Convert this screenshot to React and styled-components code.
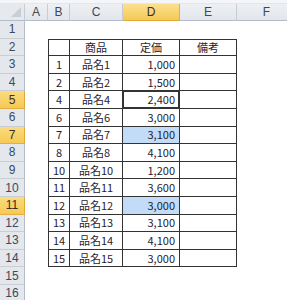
import React from 'react'
import styled, { createGlobalStyle, css } from 'styled-components'

const GlobalStyle = createGlobalStyle`
  html, body {
    margin: 0;
    padding: 0;
    background: #ffffff;
    overflow: hidden;
  }
  body {
    font-family: "Noto Sans CJK JP", "Noto Sans", sans-serif;
  }
`

const COLS = ['A', 'B', 'C', 'D', 'E', 'F']
const ACTIVE_COL = 'D'
const ACTIVE_ROWS = [5, 7, 11]

const HEAD = ['', '商品', '定価', '備考']
const ITEMS = [
  [1, '1,000'],
  [2, '1,500'],
  [4, '2,400'],
  [6, '3,000'],
  [7, '3,100'],
  [8, '4,100'],
  [10, '1,200'],
  [11, '3,600'],
  [12, '3,000'],
  [13, '3,100'],
  [14, '4,100'],
  [15, '3,000'],
]

function App() {
  const rows = []
  for (let r = 1; r <= 16; r++) {
    const active = ACTIVE_ROWS.includes(r)
    const cells = []
    const tableRow = r >= 2 && r <= 14
    let values = null
    if (r === 2) values = HEAD
    else if (tableRow) {
      const [n, price] = ITEMS[r - 3]
      values = [n, '品名' + n, price, '']
    }
    cells.push(<Cell key="A" />)
    for (let c = 0; c < 4; c++) {
      if (!values) {
        cells.push(<Cell key={c} />)
        continue
      }
      const isPrice = c === 2 && r > 2
      cells.push(
        <Cell
          key={c}
          $table
          $first={c === 0}
          $top={r === 2}
          $align={isPrice ? 'right' : 'center'}
          $selected={isPrice && (r === 7 || r === 11)}
          $current={isPrice && r === 5}
        >
          {values[c]}
        </Cell>
      )
    }
    cells.push(<Cell key="F" />)
    rows.push(
      <React.Fragment key={r}>
        <RowHeader $active={active}>{r}</RowHeader>
        {cells}
      </React.Fragment>
    )
  }

  return (
    <>
      <GlobalStyle />
      <Sheet>
        <TopStrip />
        <Corner>
          <CornerMark />
        </Corner>
        {COLS.map((c) => (
          <ColHeader key={c} $active={c === ACTIVE_COL}>
            {c}
          </ColHeader>
        ))}
        {rows}
      </Sheet>
    </>
  )
}

const Sheet = styled.div`
  display: grid;
  grid-template-columns: 25px 23px 22px 53px 57px 57px 60px;
  grid-template-rows: 4px 17px repeat(16, 17.6px);
  width: 287px;
  height: 300px;
  overflow: hidden;
  background: #ffffff;
`

const TopStrip = styled.div`
  grid-column: 1 / -1;
  background: #f4f6f9;
  border-bottom: 1px solid #e3e7ec;
`

const headerBase = css`
  box-sizing: border-box;
  display: flex;
  align-items: center;
  justify-content: center;
  font-family: "Liberation Sans", Arial, sans-serif;
  font-size: 12px;
  color: #3b4a5e;
`

const Corner = styled.div`
  ${headerBase};
  position: relative;
  background: #e6e9ee;
  border-right: 1px solid #c6ccd4;
  border-bottom: 1px solid #b3bcc8;
`

const CornerMark = styled.div`
  position: absolute;
  right: 3px;
  bottom: 3px;
  width: 0;
  height: 0;
  border-left: 10px solid transparent;
  border-bottom: 10px solid #c9ced5;
`

const ColHeader = styled.div`
  ${headerBase};
  background: ${(p) =>
    p.$active
      ? 'linear-gradient(#fbe08f, #f6c955)'
      : 'linear-gradient(#eef0f3, #e2e6eb)'};
  border-right: 1px solid ${(p) => (p.$active ? '#e3b045' : '#c6ccd4')};
  border-bottom: 1px solid ${(p) => (p.$active ? '#e1a93a' : '#b3bcc8')};
  color: ${(p) => (p.$active ? '#33302a' : '#3b4a5e')};
`

const RowHeader = styled.div`
  ${headerBase};
  background: ${(p) =>
    p.$active ? 'linear-gradient(#fbdb7e, #f6c955)' : '#e4e7ec'};
  border-right: 1px solid ${(p) => (p.$active ? '#e1a93a' : '#b3bcc8')};
  border-bottom: 1px solid ${(p) => (p.$active ? '#e3b045' : '#c9ced5')};
  color: ${(p) => (p.$active ? '#33302a' : '#3b4a5e')};
`

const Cell = styled.div`
  box-sizing: border-box;
  display: flex;
  align-items: center;
  justify-content: ${(p) => (p.$align === 'right' ? 'flex-end' : 'center')};
  padding: ${(p) => (p.$align === 'right' ? '0 4px 0 0' : '0')};
  font-size: 11px;
  line-height: 1;
  color: #1f2330;
  background: ${(p) => (p.$selected ? '#c2dcf7' : '#ffffff')};
  ${(p) =>
    p.$table &&
    css`
      border-right: 1px solid #333;
      border-bottom: 1px solid #333;
      ${p.$first && 'border-left: 1px solid #333;'}
      ${p.$top && 'border-top: 1px solid #333;'}
    `}
  ${(p) =>
    p.$current &&
    css`
      box-shadow: inset 0 0 0 1px #333, inset 0 0 0 2px #ffffff;
    `}
`

export default App
